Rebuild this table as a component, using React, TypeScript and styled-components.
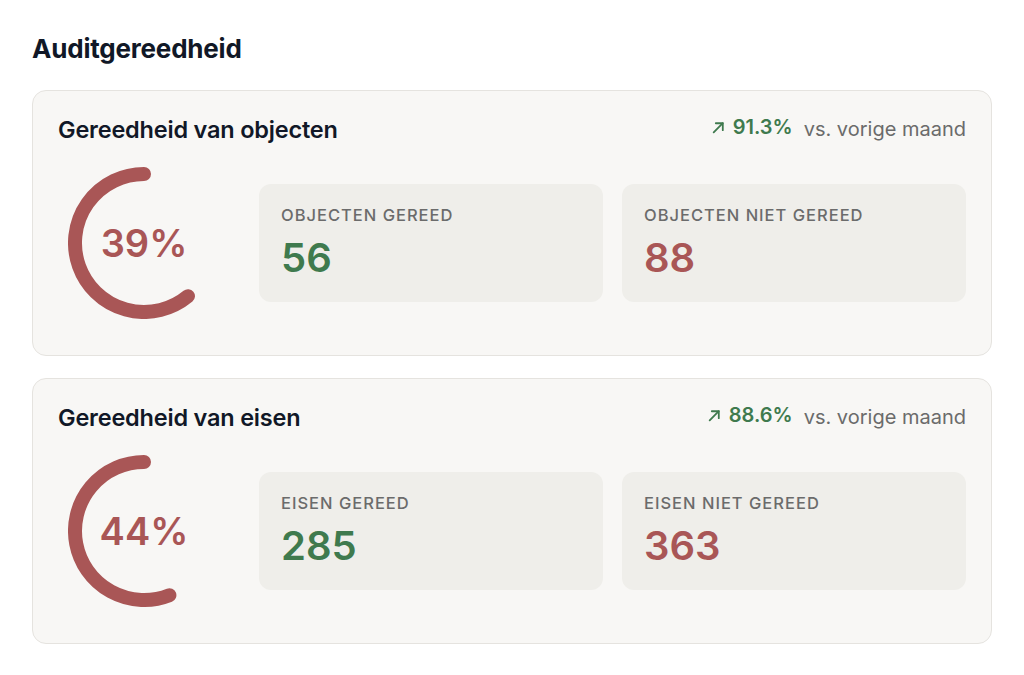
import React from 'react';
import styled, { createGlobalStyle } from 'styled-components';

const GlobalStyle = createGlobalStyle`
  html, body {
    margin: 0;
    padding: 0;
    background: #ffffff;
    font-family: Inter, "Noto Sans", "Liberation Sans", sans-serif;
    -webkit-font-smoothing: antialiased;
  }
`;

const Page = styled.div`
  padding: 30px 32px 32px;
  box-sizing: border-box;
  width: 1024px;
`;

const PageTitle = styled.h1`
  margin: 0 0 22px;
  font-size: 26px;
  line-height: 38px;
  font-weight: 700;
  color: #111827;
  letter-spacing: -0.2px;
`;

const Stack = styled.div`
  display: flex;
  flex-direction: column;
  gap: 22px;
`;

const Card = styled.section`
  background: #f8f7f5;
  border: 1px solid #e5e3df;
  border-radius: 14px;
  padding: 25px 25px 36px;
`;

const CardHeader = styled.div`
  display: flex;
  align-items: center;
  justify-content: space-between;
  height: 26px;
`;

const CardTitle = styled.h2`
  margin: 0;
  font-size: 23.5px;
  font-weight: 600;
  color: #111827;
  letter-spacing: -0.2px;
`;

const Trend = styled.div`
  display: flex;
  align-items: center;
  gap: 11px;
`;

const TrendValue = styled.span`
  display: flex;
  align-items: center;
  gap: 7px;
  margin-top: -4px;
  font-size: 20px;
  font-weight: 600;
  color: #3f7a4e;
`;

const TrendLabel = styled.span`
  font-size: 20px;
  color: #6b6b6b;
`;

const Body = styled.div`
  display: flex;
  align-items: center;
  margin-top: 25px;
  gap: 29px;
`;

const GaugeWrap = styled.div`
  position: relative;
  width: 172px;
  height: 152px;
  flex-shrink: 0;
  display: flex;
  justify-content: center;
`;

const GaugeText = styled.div`
  position: absolute;
  inset: 0;
  display: flex;
  align-items: center;
  justify-content: center;
  font-size: 38px;
  font-weight: 600;
  color: #a95656;
`;

const Stats = styled.div`
  flex: 1;
  display: flex;
  gap: 19px;
`;

const StatBox = styled.div`
  flex: 1;
  background: #efeeea;
  border-radius: 12px;
  padding: 20px 22px;
`;

const StatLabel = styled.div`
  font-size: 16.5px;
  line-height: 22px;
  font-weight: 500;
  letter-spacing: 1px;
  color: #6b6b6b;
  text-transform: uppercase;
`;

const StatValue = styled.div<{ tone: 'good' | 'bad' }>`
  margin-top: 8px;
  font-size: 40px;
  line-height: 48px;
  font-weight: 600;
  color: ${({ tone }) => (tone === 'good' ? '#3f7a4e' : '#a95656')};
`;

const ArrowUpRight = () => (
  <svg width="15" height="15" viewBox="0 0 14 14" fill="none" stroke="#3f7a4e" strokeWidth="1.7" strokeLinecap="round" strokeLinejoin="round">
    <path d="M2.5 11.5 L11 3" />
    <path d="M4.5 3 H11 V9.5" />
  </svg>
);

const Gauge = ({ percent }: { percent: number }) => {
  const r = 69;
  const c = 76;
  const angle = ((100 - percent) / 100) * 360;
  const rad = (angle * Math.PI) / 180;
  const x = c - r * Math.sin(rad);
  const y = c - r * Math.cos(rad);
  const large = angle > 180 ? 1 : 0;
  return (
    <GaugeWrap>
      <svg width="152" height="152" viewBox="0 0 152 152">
        <path
          d={`M ${c} ${c - r} A ${r} ${r} 0 ${large} 0 ${x} ${y}`}
          fill="none"
          stroke="#a95656"
          strokeWidth="14"
          strokeLinecap="round"
        />
      </svg>
      <GaugeText>{percent}%</GaugeText>
    </GaugeWrap>
  );
};

const sections = [
  {
    title: 'Gereedheid van objecten',
    trend: '91.3%',
    percent: 39,
    good: { label: 'Objecten gereed', value: 56 },
    bad: { label: 'Objecten niet gereed', value: 88 },
  },
  {
    title: 'Gereedheid van eisen',
    trend: '88.6%',
    percent: 44,
    good: { label: 'Eisen gereed', value: 285 },
    bad: { label: 'Eisen niet gereed', value: 363 },
  },
];

export default function App() {
  return (
    <>
      <GlobalStyle />
      <Page>
        <PageTitle>Auditgereedheid</PageTitle>
        <Stack>
          {sections.map(section => (
            <Card key={section.title}>
              <CardHeader>
                <CardTitle>{section.title}</CardTitle>
                <Trend>
                  <TrendValue>
                    <ArrowUpRight />
                    {section.trend}
                  </TrendValue>
                  <TrendLabel>vs. vorige maand</TrendLabel>
                </Trend>
              </CardHeader>
              <Body>
                <Gauge percent={section.percent} />
                <Stats>
                  <StatBox>
                    <StatLabel>{section.good.label}</StatLabel>
                    <StatValue tone="good">{section.good.value}</StatValue>
                  </StatBox>
                  <StatBox>
                    <StatLabel>{section.bad.label}</StatLabel>
                    <StatValue tone="bad">{section.bad.value}</StatValue>
                  </StatBox>
                </Stats>
              </Body>
            </Card>
          ))}
        </Stack>
      </Page>
    </>
  );
}
